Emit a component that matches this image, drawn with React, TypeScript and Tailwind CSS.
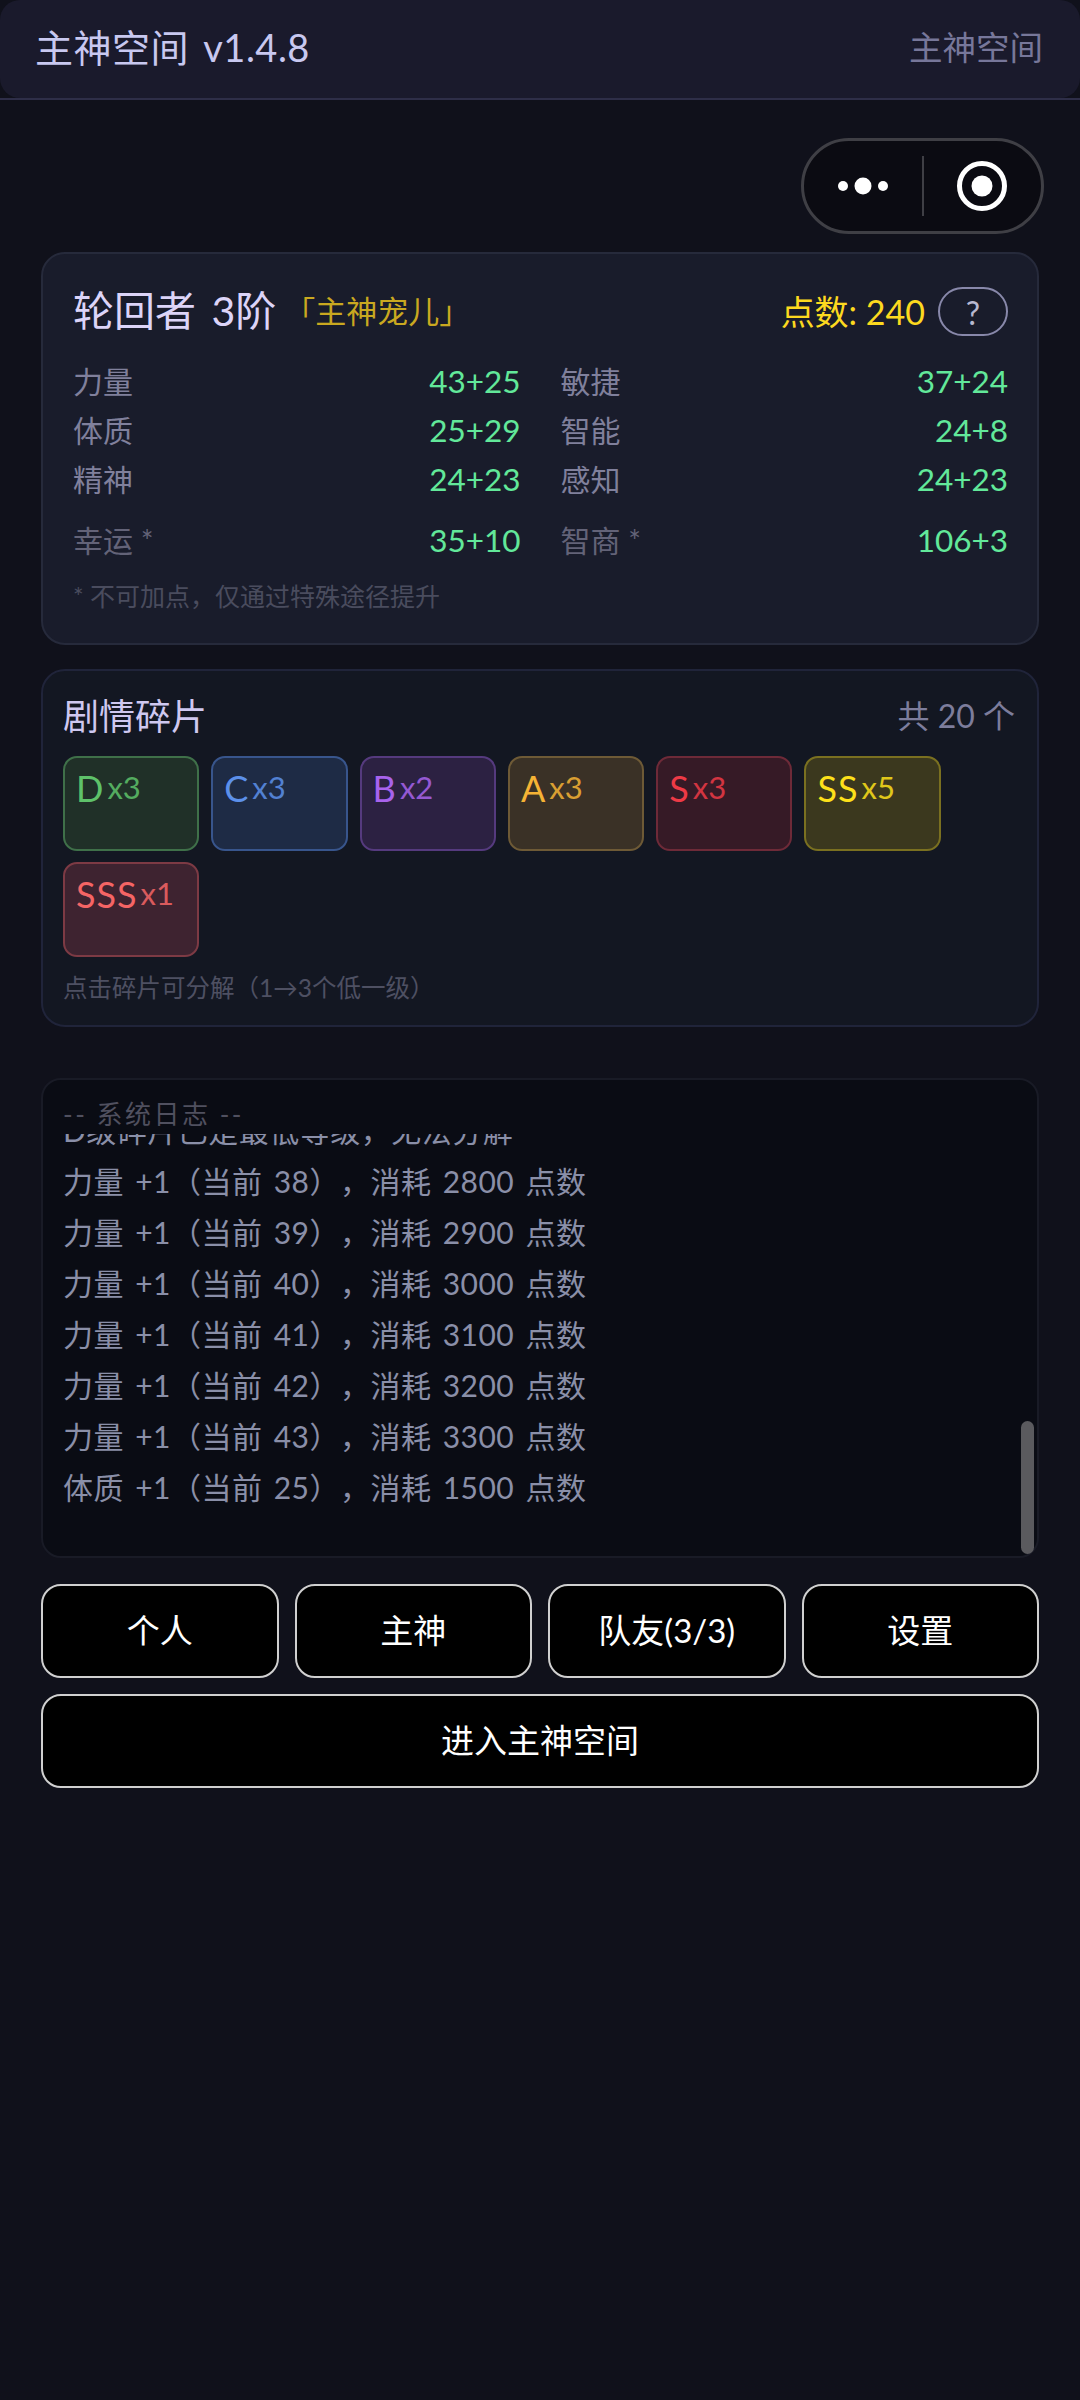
const stats = [
  { label: "力量", value: "43+25" },
  { label: "敏捷", value: "37+24" },
  { label: "体质", value: "25+29" },
  { label: "智能", value: "24+8" },
  { label: "精神", value: "24+23" },
  { label: "感知", value: "24+23" },
];

const shards = [
  { rank: "D", count: "x3", className: "bg-[#203028] border-[#3f7049] text-[#5ec26a]" },
  { rank: "C", count: "x3", className: "bg-[#1e2b45] border-[#38558c] text-[#5c90ea]" },
  { rank: "B", count: "x2", className: "bg-[#2c2142] border-[#553a7e] text-[#a863ec]" },
  { rank: "A", count: "x3", className: "bg-[#3a3126] border-[#6e5a36] text-[#f5b335]" },
  { rank: "S", count: "x3", className: "bg-[#361a26] border-[#6e2a38] text-[#ee3a46]" },
  { rank: "SS", count: "x5", className: "bg-[#3b381e] border-[#7a7020] text-[#fde01a]" },
  { rank: "SSS", count: "x1", className: "bg-[#3e2330] border-[#7d3a44] text-[#f56565]" },
];

const logs = [
  "D级碎片已是最低等级，无法分解",
  "力量 +1（当前 38），消耗 2800 点数",
  "力量 +1（当前 39），消耗 2900 点数",
  "力量 +1（当前 40），消耗 3000 点数",
  "力量 +1（当前 41），消耗 3100 点数",
  "力量 +1（当前 42），消耗 3200 点数",
  "力量 +1（当前 43），消耗 3300 点数",
  "体质 +1（当前 25），消耗 1500 点数",
];

function ActionButton({ children }: { children: React.ReactNode }) {
  return (
    <button className="h-[94px] rounded-[20px] border-2 border-[#d0d0d0] bg-black text-[33px] text-white">
      {children}
    </button>
  );
}

export default function App() {
  return (
    <div className="min-h-[2400px] bg-[#10111b] font-[Lato,'Noto_Sans_CJK_SC',sans-serif] [text-spacing-trim:space-all]">
      {/* Header */}
      <header className="border-b-2 border-[#2e2e48]">
        <div className="flex h-[98px] items-center justify-between rounded-[20px] bg-[#1a1a2c] pb-[3px] pl-[35px] pr-[37px]">
          <span className="text-[38px] tracking-[0.5px] text-[#c8c8f0] [word-spacing:4px]">主神空间 v1.4.8</span>
          <span className="text-[33.5px] text-[#77779a]">主神空间</span>
        </div>
      </header>

      <main className="px-[41px]">
        {/* Capsule */}
        <div className="-mr-[5px] flex justify-end pt-[38px]">
          <div className="flex h-[96px] w-[243px] items-center rounded-full border-[3px] border-[#3f3f45] bg-[#0b0b12]">
            <div className="flex flex-1 items-center justify-center">
              <svg width="56" height="20" viewBox="0 0 56 20" fill="white">
                <circle cx="8" cy="10" r="5" />
                <circle cx="28" cy="10" r="8.5" />
                <circle cx="48" cy="10" r="5" />
              </svg>
            </div>
            <div className="h-[60px] w-[2px] bg-[#3f3f45]" />
            <div className="flex flex-1 items-center justify-center">
              <svg width="52" height="52" viewBox="0 0 52 52" fill="none">
                <circle cx="26" cy="26" r="22.5" stroke="white" strokeWidth="5" />
                <circle cx="26" cy="26" r="10.5" fill="white" />
              </svg>
            </div>
          </div>
        </div>

        {/* Character */}
        <section className="mt-[18px] h-[393px] rounded-[24px] border-2 border-[#262a3b] bg-[#191c2b] pl-[30px] pr-[29px] pt-[31px]">
          <div className="flex h-[52px] items-center justify-between">
            <div className="flex items-center">
              <span className="text-[41px] text-[#dcd4f8] [word-spacing:5px]">轮回者 3阶</span>
              <span className="ml-[8px] text-[31px] text-[#c9a820]">「主神宠儿」</span>
            </div>
            <div className="flex items-center gap-[13px]">
              <span className="text-[34px] text-[#fdd91f]">点数: 240</span>
              <button className="h-[49px] w-[70px] rounded-full border-2 border-[#8888aa] text-[32px] text-[#b8b8d0]">
                ?
              </button>
            </div>
          </div>
          <div className="mt-[20px] grid grid-cols-2 gap-x-[40px]">
            {stats.map((s) => (
              <div key={s.label} className="flex h-[49px] items-center justify-between">
                <span className="text-[30px] text-[#80809c]">{s.label}</span>
                <span className="text-[31.5px] text-[#62e89a]">{s.value}</span>
              </div>
            ))}
          </div>
          <div className="mt-[12px] grid grid-cols-2 gap-x-[40px]">
            <div className="flex h-[49px] items-center justify-between">
              <span className="text-[30px] text-[#636378]">幸运 *</span>
              <span className="text-[31.5px] text-[#62e89a]">35+10</span>
            </div>
            <div className="flex h-[49px] items-center justify-between">
              <span className="text-[30px] text-[#636378]">智商 *</span>
              <span className="text-[31.5px] text-[#62e89a]">106+3</span>
            </div>
          </div>
          <p className="mt-[13px] text-[25px] text-[#4a4c5e]">* 不可加点，仅通过特殊途径提升</p>
        </section>

        {/* Shards */}
        <section className="mt-[24px] h-[358px] rounded-[24px] border-2 border-[#20243a] bg-[#131722] pl-[20px] pr-[22px] pt-[20px]">
          <div className="flex h-[50px] items-center justify-between">
            <span className="text-[36px] text-[#cfc8f0]">剧情碎片</span>
            <span className="text-[32px] text-[#7d7d9c]">共 20 个</span>
          </div>
          <div className="mt-[15px] flex flex-wrap gap-x-[12px] gap-y-[11px]">
            {shards.map((s) => (
              <div
                key={s.rank}
                className={`flex h-[95px] w-[136.3px] items-start rounded-[14px] border-2 pl-[11px] pt-[3px] ${s.className}`}
              >
                <span className="text-[36px] tracking-[1px]">{s.rank}</span>
                <span className="ml-[3px] mt-[3px] text-[31px] opacity-85">{s.count}</span>
              </div>
            ))}
          </div>
          <p className="mt-[13px] text-[24.5px] text-[#4e5062]">点击碎片可分解（1→3个低一级）</p>
        </section>

        {/* System log */}
        <section className="relative mt-[51px] h-[480px] rounded-[20px] border-2 border-[#191b26] bg-[#0a0c14] pl-[20px] pt-[17px]">
          <p className="h-[37px] text-[26px] leading-[35px] tracking-[2.5px] text-[#50505f]">-- 系统日志 --</p>
          <div className="h-[410px] overflow-hidden">
            <div className="-mt-[29px]">
              {logs.map((line) => (
                <p
                  key={line}
                  className="h-[51px] text-[30px] leading-[51px] tracking-[0.5px] text-[#8a8fa8] [word-spacing:3px]"
                >
                  {line}
                </p>
              ))}
            </div>
          </div>
          <div className="absolute bottom-[2px] right-[3px] h-[133px] w-[13px] rounded-full bg-[#5a5a5e]" />
        </section>

        {/* Actions */}
        <div className="mt-[26px] grid grid-cols-4 gap-x-[16px]">
          <ActionButton>个人</ActionButton>
          <ActionButton>主神</ActionButton>
          <ActionButton>队友(3/3)</ActionButton>
          <ActionButton>设置</ActionButton>
        </div>
        <div className="mt-[16px] grid">
          <ActionButton>进入主神空间</ActionButton>
        </div>
      </main>
    </div>
  );
}
